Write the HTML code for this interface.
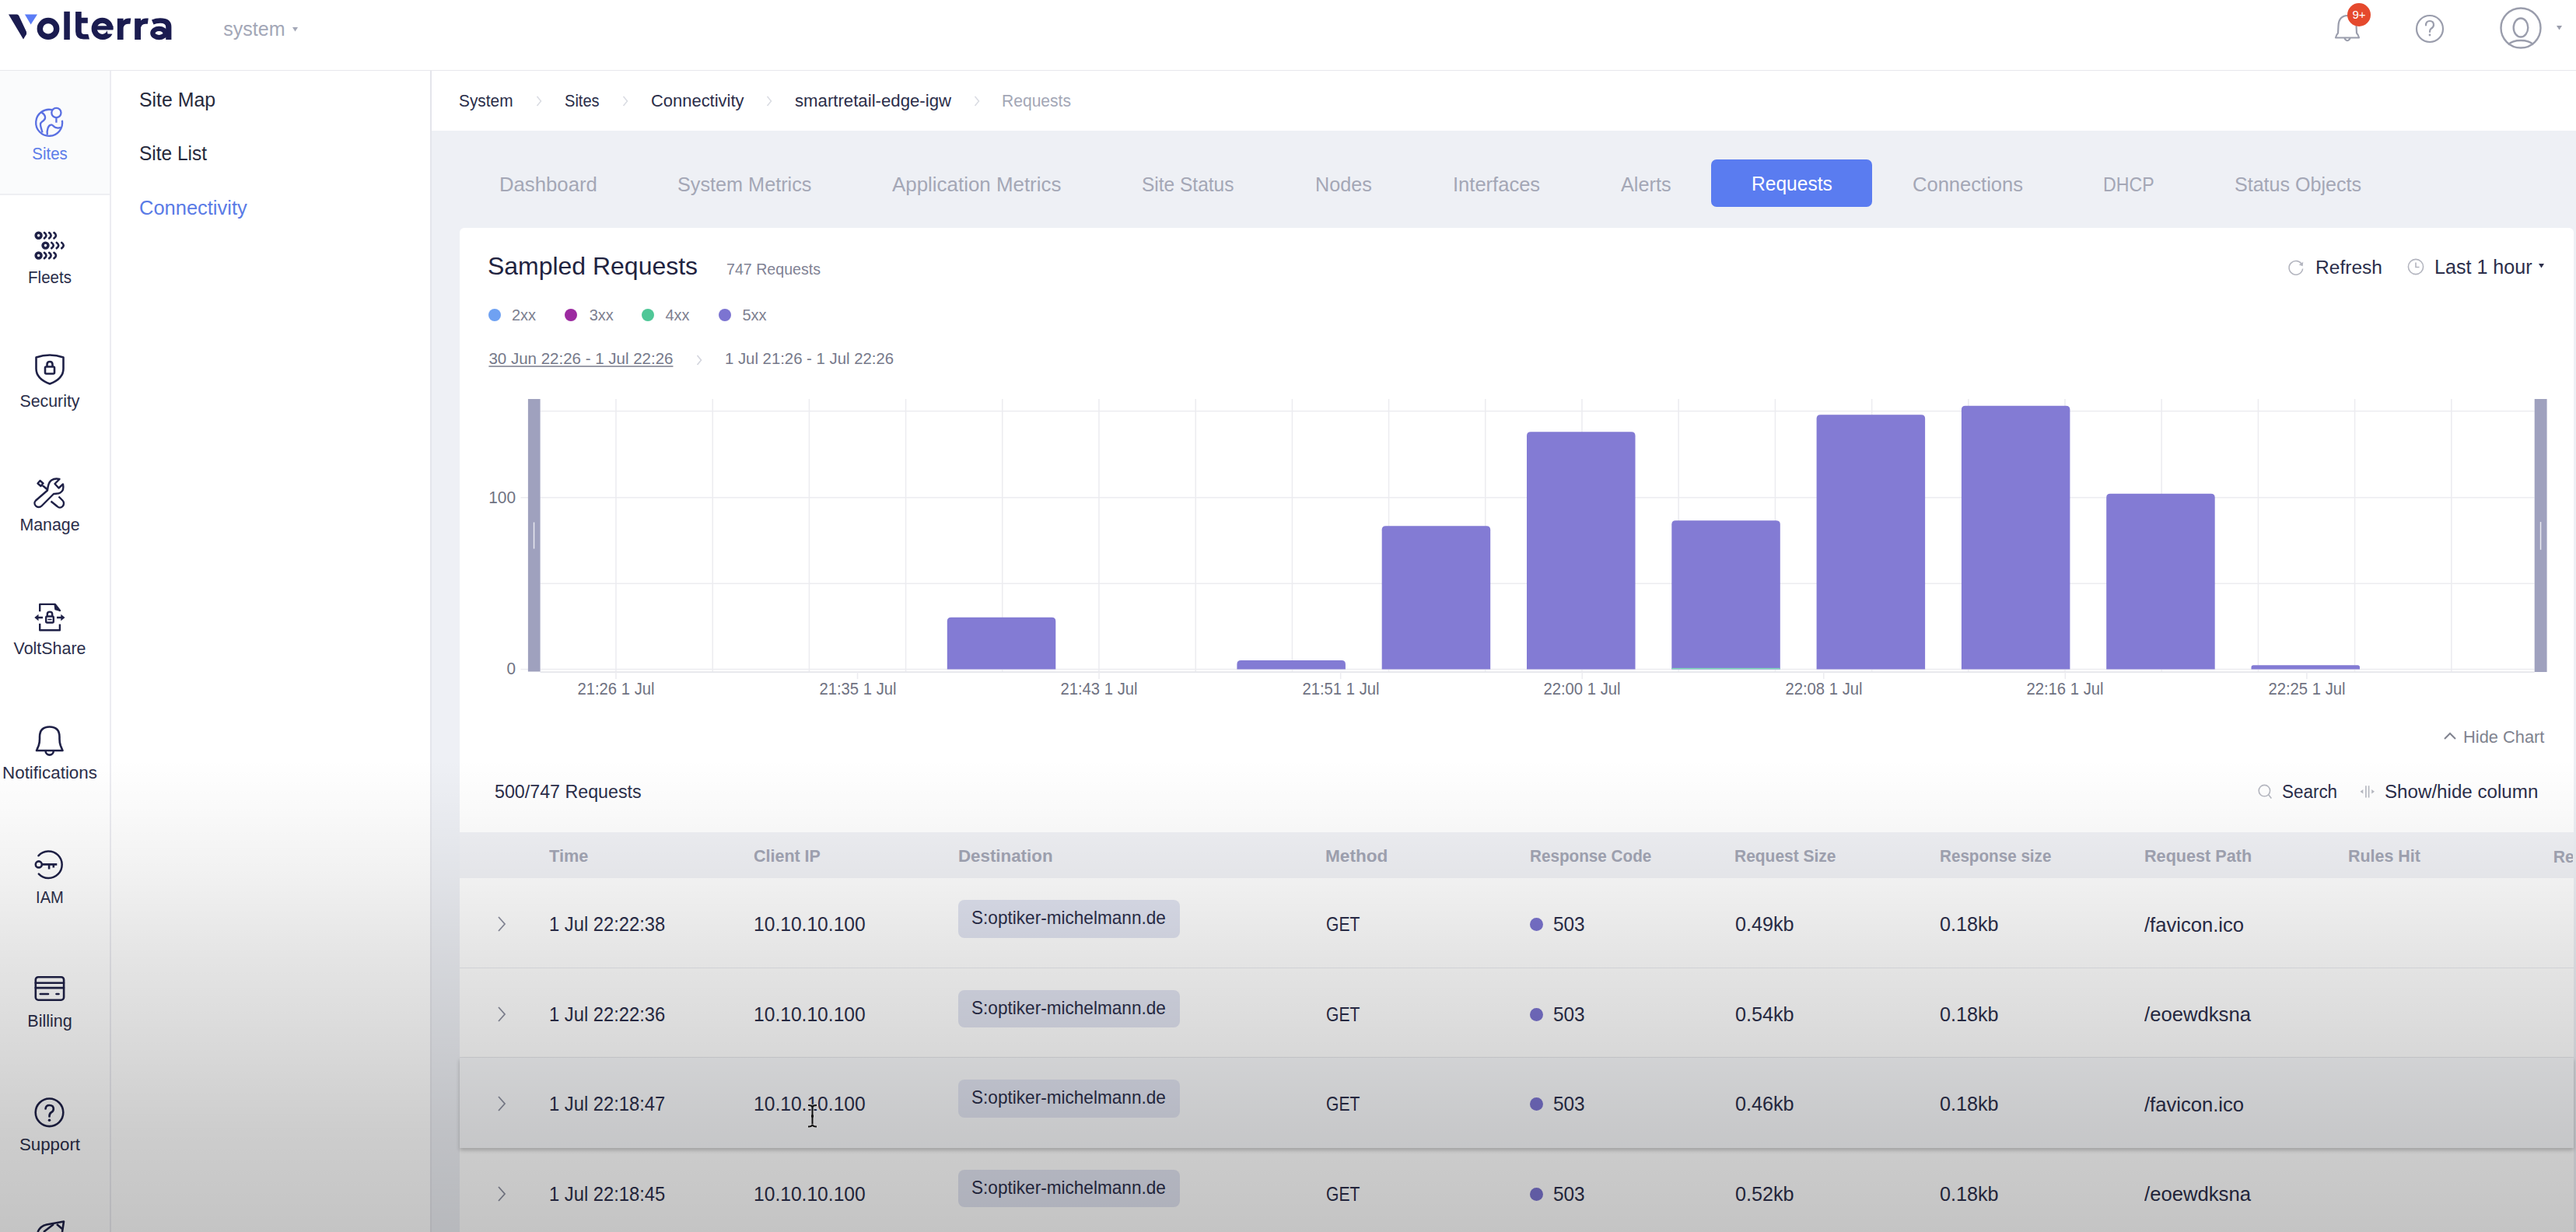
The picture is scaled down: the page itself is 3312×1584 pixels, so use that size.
<!DOCTYPE html>
<html><head><meta charset="utf-8"><title>Volterra - Requests</title>
<style>
html,body{margin:0;padding:0;width:3312px;height:1584px;overflow:hidden;background:#fff}
body{position:relative;font-family:"Liberation Sans",sans-serif}
.t{position:absolute;white-space:nowrap}
.r{position:absolute;display:block}
svg text{font-family:"Liberation Sans",sans-serif}
</style></head><body>
<div class="r" style="left:0.0px;top:0.0px;width:3312.0px;height:1584.0px;background:#ffffff;"></div>
<div class="r" style="left:554.8px;top:168.0px;width:2757.2px;height:1416.0px;background:#eef0f5;"></div>
<div class="r" style="left:0.0px;top:89.5px;width:3312.0px;height:1.5px;background:#e7e8ec;"></div>
<div class="r" style="left:141.0px;top:91.0px;width:1.5px;height:1493.0px;background:#ececf1;"></div>
<div class="r" style="left:553.2px;top:91.0px;width:1.6px;height:1493.0px;background:#e4e5eb;"></div>
<div class="r" style="left:0.0px;top:91.0px;width:141.0px;height:158.0px;background:#fafbfc;"></div>
<div class="r" style="left:0.0px;top:249.0px;width:141.0px;height:1.5px;background:#eeeff3;"></div>
<svg class="r" style="left:0;top:0" width="260" height="90" viewBox="0 0 260 90">
<path d="M11 18.4 L21.8 18.4 Q23.5 18.6 24.3 20.2 L33.8 40.5 Q34.6 42.5 33.8 44.3 L30 50.6 Z" fill="#1b1c50"/>
<path d="M31.9 18.6 L48 18.6 L39.6 31.6 Z" fill="#5b7cf5"/>
<ellipse cx="62" cy="36.9" rx="10.7" ry="10.4" fill="none" stroke="#1b1c50" stroke-width="7.4"/>
<rect x="82.3" y="14.8" width="7.5" height="36.2" fill="#1b1c50"/>
<path d="M97.1 15.1 L104.7 15.1 L104.7 22.7 L112.8 22.7 L112.8 29.7 L104.7 29.7 L104.7 40.5 Q104.7 43.9 108.3 43.9 L113.3 43.9 L115 50.4 L107.5 50.4 Q97.1 50.4 97.1 40.5 Z" fill="#1b1c50"/>
<ellipse cx="131.5" cy="36.8" rx="10.4" ry="10.6" fill="none" stroke="#1b1c50" stroke-width="7"/>
<rect x="121" y="33.3" width="24.5" height="5.2" fill="#1b1c50"/>
<path d="M137.5 38.5 L147 38.5 L147 43.8 L138.5 43.8 Z" fill="#ffffff"/>
<path d="M136.5 43.8 L144.5 43.8 Q141 51 131.8 51 L131.5 44.5 Q134.5 44.5 136.5 43.8 Z" fill="#1b1c50"/>
<path d="M150.9 51 L150.9 23.8 L158.6 23.8 L158.6 26.5 Q161 23.6 165.5 23.6 L168.3 23.6 L167.3 30.8 L164.5 30.8 Q158.6 30.8 158.6 37.5 L158.6 51 Z" fill="#1b1c50"/>
<path d="M173.2 51 L173.2 23.8 L181 23.8 L181 26.5 Q183.4 23.6 187.9 23.6 L190.8 23.6 L189.8 30.8 L187 30.8 Q181 30.8 181 37.5 L181 51 Z" fill="#1b1c50"/>
<path d="M195 25.5 Q200 23.2 206 23.2 Q220.4 23.2 220.4 34.5 L220.4 51 L213.2 51 L213.2 34.5 Q213.2 29.8 206 29.8 Q201 29.8 197.5 31.5 Z" fill="#1b1c50"/>
<ellipse cx="204.5" cy="42.5" rx="8.1" ry="5.6" fill="none" stroke="#1b1c50" stroke-width="6.4"/>
</svg>
<div class="t" style="left:287.3px;top:24.0px;font-size:25px;line-height:27.93px;color:#a3a7b7;">system</div>
<svg class="r" style="left:375px;top:34px" width="10" height="8"><path d="M1 1 L8 1 L4.5 6.5 Z" fill="#a3a7b7"/></svg>
<svg class="r" style="left:2995px;top:12px" width="50" height="50" viewBox="0 0 50 50">
<path d="M8 36.5 Q9 32.5 11 30.5 L11.5 21 Q12 8.5 23 8 Q34 8.5 34.5 21 L35 30.5 Q37 32.5 38 36.5 Z" fill="none" stroke="#9a9dac" stroke-width="2.2" stroke-linejoin="round"/>
<path d="M19.3 37 Q23 43.5 26.7 37" fill="none" stroke="#9a9dac" stroke-width="2.2"/>
</svg>
<div class="r" style="left:3018px;top:4px;width:30px;height:30px;border-radius:50%;background:#e5492d;color:#fff;font-size:15px;line-height:30px;text-align:center;font-weight:400">9+</div>
<svg class="r" style="left:3100px;top:13px" width="48" height="48" viewBox="0 0 48 48">
<circle cx="24" cy="24" r="17" fill="none" stroke="#9a9dac" stroke-width="2.2"/>
<path d="M19 19.5 Q19 14 24 14 Q29 14 29 19 Q29 22 25.5 24 Q24 25 24 28" fill="none" stroke="#9a9dac" stroke-width="2.2" stroke-linecap="round"/>
<circle cx="24" cy="32" r="1.4" fill="#9a9dac"/>
</svg>
<svg class="r" style="left:3212px;top:7px" width="60" height="60" viewBox="0 0 60 60">
<circle cx="29" cy="29" r="25.5" fill="none" stroke="#9a9dac" stroke-width="2.4"/>
<ellipse cx="29" cy="28.5" rx="9.3" ry="12" fill="none" stroke="#9a9dac" stroke-width="2.4"/>
<path d="M13 50.5 Q18 45 29 45 Q40 45 45 50.5" fill="none" stroke="#9a9dac" stroke-width="2.4"/>
</svg>
<svg class="r" style="left:3286px;top:32px" width="10" height="8"><path d="M1 1 L8 1 L4.5 6.5 Z" fill="#9a9dac"/></svg>
<svg class="r" style="left:36px;top:130px" width="56" height="56" viewBox="0 0 56 56">
<path d="M30.9 11.2 A17 17 0 1 0 43.9 24.8" fill="none" stroke="#5a70e2" stroke-width="2.3"/>
<circle cx="36.4" cy="15" r="6.1" fill="none" stroke="#5a70e2" stroke-width="2.3"/>
<path d="M36.4 21.2 L36.4 27.7" stroke="#5a70e2" stroke-width="2.3"/>
<path d="M17.5 14.5 C23 18, 24 23, 18 26.5 C14 29, 17 34, 18.5 40.5" fill="none" stroke="#5a70e2" stroke-width="2.3"/>
<path d="M24.8 43.5 C24 37, 26 31, 29.5 30.5 C32 30, 33 33.5, 36 34.2 C38.5 34.8, 40.5 34.5, 42 33.8" fill="none" stroke="#5a70e2" stroke-width="2.3"/>
</svg>
<div class="t" style="left:-436.0px;width:1000px;text-align:center;top:186.0px;font-size:21.5px;line-height:24.02px;color:#5d7de9;transform:scaleX(0.9519);transform-origin:center;">Sites</div>
<svg class="r" style="left:38px;top:290px" width="54" height="50" viewBox="0 0 54 50"><circle cx="11.6" cy="12.8" r="3.5" fill="none" stroke="#1f2147" stroke-width="3.4"/><path d="M19.0 9.200000000000001 Q23.9 12.8 19.0 16.400000000000002" fill="none" stroke="#1f2147" stroke-width="2.7" stroke-linecap="round"/><path d="M25.2 9.200000000000001 Q30.099999999999998 12.8 25.2 16.400000000000002" fill="none" stroke="#1f2147" stroke-width="2.7" stroke-linecap="round"/><path d="M31.5 9.200000000000001 Q36.4 12.8 31.5 16.400000000000002" fill="none" stroke="#1f2147" stroke-width="2.7" stroke-linecap="round"/><circle cx="20.5" cy="25.6" r="3.5" fill="none" stroke="#1f2147" stroke-width="3.4"/><path d="M28.3 22.0 Q33.2 25.6 28.3 29.200000000000003" fill="none" stroke="#1f2147" stroke-width="2.7" stroke-linecap="round"/><path d="M34.8 22.0 Q39.7 25.6 34.8 29.200000000000003" fill="none" stroke="#1f2147" stroke-width="2.7" stroke-linecap="round"/><path d="M41.3 22.0 Q46.2 25.6 41.3 29.200000000000003" fill="none" stroke="#1f2147" stroke-width="2.7" stroke-linecap="round"/><circle cx="11.6" cy="38.5" r="3.5" fill="none" stroke="#1f2147" stroke-width="3.4"/><path d="M19.0 34.9 Q23.9 38.5 19.0 42.1" fill="none" stroke="#1f2147" stroke-width="2.7" stroke-linecap="round"/><path d="M25.2 34.9 Q30.099999999999998 38.5 25.2 42.1" fill="none" stroke="#1f2147" stroke-width="2.7" stroke-linecap="round"/><path d="M31.5 34.9 Q36.4 38.5 31.5 42.1" fill="none" stroke="#1f2147" stroke-width="2.7" stroke-linecap="round"/></svg>
<div class="t" style="left:-436.0px;width:1000px;text-align:center;top:345.3px;font-size:21.5px;line-height:24.02px;color:#2b2e4a;transform:scaleX(0.9548);transform-origin:center;">Fleets</div>
<svg class="r" style="left:40px;top:450px" width="48" height="50" viewBox="0 0 48 50">
<path d="M6.5 9.5 Q24 3.5 41.5 9.5 L41.5 24 Q41.5 37 24 43.5 Q6.5 37 6.5 24 Z" fill="none" stroke="#1f2147" stroke-width="2.6" stroke-linejoin="round"/>
<rect x="18" y="21.5" width="12" height="9" rx="1.5" fill="none" stroke="#1f2147" stroke-width="2.6"/>
<path d="M20.5 21.5 L20.5 18.5 Q20.5 15 24 15 Q27.5 15 27.5 18.5 L27.5 21.5" fill="none" stroke="#1f2147" stroke-width="2.6"/>
</svg>
<div class="t" style="left:-436.0px;width:1000px;text-align:center;top:503.8px;font-size:21.5px;line-height:24.02px;color:#2b2e4a;transform:scaleX(0.9915);transform-origin:center;">Security</div>
<svg class="r" style="left:40px;top:608px" width="48" height="50" viewBox="0 0 48 50">
<path d="M21 22.5 C21.5 17 22.5 12 26 9.5 C29 7.5 33 7 36.5 8 L30.5 14 L35.5 19.5 L41 14.5 C42 19 41 23.5 37.5 25.5 C35 27 32 26.5 29 27 L13.5 42.5 C11.5 44.5 8 44.5 6 42.5 C4 40.5 4 37.5 6 35.5 Z" fill="none" stroke="#1f2147" stroke-width="2.4" stroke-linejoin="round"/>
<path d="M8.5 13.5 L11.5 10 L15.5 13.5 L12.5 17 Z M14 15.5 L21 21.5" fill="none" stroke="#1f2147" stroke-width="2.4" stroke-linejoin="round"/>
<path d="M35.5 30.5 L40.5 35.5 C42.5 37.5 42.5 41 40.5 43 C38.5 45 35.5 45 33.5 43 L25.5 36.5" fill="none" stroke="#1f2147" stroke-width="2.4"/>
</svg>
<div class="t" style="left:-436.0px;width:1000px;text-align:center;top:663.1px;font-size:21.5px;line-height:24.02px;color:#2b2e4a;transform:scaleX(0.9911);transform-origin:center;">Manage</div>
<svg class="r" style="left:40px;top:768px" width="48" height="50" viewBox="0 0 48 50">
<path d="M11.2 18.3 L11.2 8.9 L30.8 8.9 L37.3 17.4" fill="none" stroke="#1f2147" stroke-width="2.4" stroke-linejoin="round"/>
<path d="M30.2 8.9 L31 15.5 L37.3 17.4 Z" fill="#1f2147" stroke="#1f2147" stroke-width="1.5" stroke-linejoin="round"/>
<path d="M11.2 33.7 L11.2 42.2 L36.9 42.2 L36.9 34.5" fill="none" stroke="#1f2147" stroke-width="2.4" stroke-linejoin="round"/>
<path d="M8 26 L15 26 M33 26 L40 26" stroke="#1f2147" stroke-width="2.4"/>
<path d="M4.3 26 L9.5 21.8 L9.5 30.2 Z M43.5 26 L38.3 21.8 L38.3 30.2 Z" fill="#1f2147"/>
<rect x="19.2" y="24.5" width="9.6" height="8" rx="1.5" fill="none" stroke="#1f2147" stroke-width="2.4"/>
<path d="M20.8 24.5 L20.8 21.5 Q20.8 18.6 24 18.6 Q27.2 18.6 27.2 21.5 L27.2 24.5" fill="none" stroke="#1f2147" stroke-width="2.4"/>
<path d="M21.5 28.5 L26.5 28.5" stroke="#1f2147" stroke-width="1.6"/>
</svg>
<div class="t" style="left:-436.0px;width:1000px;text-align:center;top:822.4px;font-size:21.5px;line-height:24.02px;color:#2b2e4a;transform:scaleX(0.9965);transform-origin:center;">VoltShare</div>
<svg class="r" style="left:40px;top:928px" width="48" height="50" viewBox="0 0 48 50">
<path d="M7 37 L40.5 37 L37.8 30.5 Q36.5 27 36.5 22 L36.5 19.5 Q36.5 6.5 23.7 6.5 Q11 6.5 11 19.5 L11 22 Q11 27 9.7 30.5 Z" fill="none" stroke="#1f2147" stroke-width="2.6" stroke-linejoin="round"/>
<path d="M18.6 37.5 A5.1 5.1 0 0 0 28.8 37.5" fill="none" stroke="#1f2147" stroke-width="2.6"/>
</svg>
<div class="t" style="left:-436.0px;width:1000px;text-align:center;top:981.5px;font-size:21.5px;line-height:24.02px;color:#2b2e4a;transform:scaleX(1.0410);transform-origin:center;">Notifications</div>
<svg class="r" style="left:40px;top:1087px" width="48" height="50" viewBox="0 0 48 50">
<path d="M9.5 13.2 A17.3 17.3 0 1 1 9.8 36.6" fill="none" stroke="#1f2147" stroke-width="2.5" stroke-linecap="round"/>
<circle cx="9.8" cy="24.4" r="4" fill="none" stroke="#1f2147" stroke-width="2.6"/>
<path d="M13.8 24.4 L33.3 24.4 M23.1 24.4 L23.1 30.4 M28.8 24.4 L28.8 28.4" fill="none" stroke="#1f2147" stroke-width="2.6"/>
</svg>
<div class="t" style="left:-436.0px;width:1000px;text-align:center;top:1141.5px;font-size:21.5px;line-height:24.02px;color:#2b2e4a;transform:scaleX(0.9366);transform-origin:center;">IAM</div>
<svg class="r" style="left:40px;top:1246px" width="48" height="50" viewBox="0 0 48 50">
<rect x="5.8" y="10.2" width="36.3" height="29.5" rx="3.5" fill="none" stroke="#1f2147" stroke-width="2.6"/>
<path d="M5.8 17.8 L42 17.8 M5.8 24.1 L42 24.1 M11.8 32 L22 32 M32.5 32 L35.5 32" fill="none" stroke="#1f2147" stroke-width="2.6" stroke-linecap="round"/>
</svg>
<div class="t" style="left:-436.0px;width:1000px;text-align:center;top:1301.1px;font-size:21.5px;line-height:24.02px;color:#2b2e4a;transform:scaleX(1.0007);transform-origin:center;">Billing</div>
<svg class="r" style="left:40px;top:1406px" width="48" height="50" viewBox="0 0 48 50">
<circle cx="23.5" cy="24.3" r="17.8" fill="none" stroke="#1f2147" stroke-width="2.6"/>
<path d="M18.6 19.5 Q19 15 23.5 15 Q28.8 15 28.8 19.8 Q28.8 22.8 25.5 24.5 Q23.5 25.8 23.5 29.5" fill="none" stroke="#1f2147" stroke-width="2.7" stroke-linecap="round"/>
<circle cx="23.5" cy="34.3" r="1.8" fill="#1f2147"/>
</svg>
<div class="t" style="left:-436.0px;width:1000px;text-align:center;top:1459.5px;font-size:21.5px;line-height:24.02px;color:#2b2e4a;transform:scaleX(1.0359);transform-origin:center;">Support</div>
<svg class="r" style="left:30px;top:1560px" width="70" height="24" viewBox="0 0 70 24">
<path d="M18.5 24 Q22 16 30 14.5 L52 10.5 L50 24" fill="none" stroke="#1f2147" stroke-width="2.6" stroke-linejoin="round"/>
<path d="M26 24 L39 14 M43 14 L50 20" fill="none" stroke="#1f2147" stroke-width="2.6"/>
</svg>
<div class="t" style="left:179.0px;top:115.0px;font-size:25px;line-height:27.93px;color:#262a3c;transform:scaleX(0.9934);transform-origin:left;">Site Map</div>
<div class="t" style="left:179.0px;top:184.4px;font-size:25px;line-height:27.93px;color:#262a3c;transform:scaleX(0.9783);transform-origin:left;">Site List</div>
<div class="t" style="left:179.0px;top:254.4px;font-size:25px;line-height:27.93px;color:#5a7be6;transform:scaleX(1.0186);transform-origin:left;">Connectivity</div>
<div class="r" style="left:554.8px;top:91.0px;width:2757.2px;height:77.0px;background:#ffffff;"></div>
<div class="t" style="left:590.2px;top:117.4px;font-size:22.5px;line-height:25.13px;color:#2b2e4a;transform:scaleX(0.9265);transform-origin:left;">System</div>
<div class="t" style="left:725.6px;top:117.4px;font-size:22.5px;line-height:25.13px;color:#2b2e4a;transform:scaleX(0.8916);transform-origin:left;">Sites</div>
<div class="t" style="left:836.5px;top:117.4px;font-size:22.5px;line-height:25.13px;color:#2b2e4a;transform:scaleX(0.9751);transform-origin:left;">Connectivity</div>
<div class="t" style="left:1021.7px;top:117.4px;font-size:22.5px;line-height:25.13px;color:#2b2e4a;transform:scaleX(0.9862);transform-origin:left;">smartretail-edge-igw</div>
<div class="t" style="left:1288.0px;top:117.4px;font-size:22.5px;line-height:25.13px;color:#a3a7b6;transform:scaleX(0.9364);transform-origin:left;">Requests</div>
<svg class="r" style="left:687.6px;top:121.5px" width="10" height="16"><path d="M2.5 2 L7.5 8 L2.5 14" fill="none" stroke="#d9dbe2" stroke-width="1.5"/></svg>
<svg class="r" style="left:799.0px;top:121.5px" width="10" height="16"><path d="M2.5 2 L7.5 8 L2.5 14" fill="none" stroke="#d9dbe2" stroke-width="1.5"/></svg>
<svg class="r" style="left:983.5px;top:121.5px" width="10" height="16"><path d="M2.5 2 L7.5 8 L2.5 14" fill="none" stroke="#d9dbe2" stroke-width="1.5"/></svg>
<svg class="r" style="left:1250.8px;top:121.5px" width="10" height="16"><path d="M2.5 2 L7.5 8 L2.5 14" fill="none" stroke="#d9dbe2" stroke-width="1.5"/></svg>
<div class="r" style="left:2199.7px;top:205.0px;width:207.8px;height:61.0px;background:#5a7cf0;border-radius:7px;"></div>
<div class="t" style="left:641.7px;top:222.9px;font-size:25.5px;line-height:28.48px;color:#a4a7b6;transform:scaleX(1.0085);transform-origin:left;">Dashboard</div>
<div class="t" style="left:870.9px;top:222.9px;font-size:25.5px;line-height:28.48px;color:#a4a7b6;transform:scaleX(0.9893);transform-origin:left;">System Metrics</div>
<div class="t" style="left:1146.6px;top:222.9px;font-size:25.5px;line-height:28.48px;color:#a4a7b6;transform:scaleX(1.0159);transform-origin:left;">Application Metrics</div>
<div class="t" style="left:1468.3px;top:222.9px;font-size:25.5px;line-height:28.48px;color:#a4a7b6;transform:scaleX(0.9602);transform-origin:left;">Site Status</div>
<div class="t" style="left:1690.5px;top:222.9px;font-size:25.5px;line-height:28.48px;color:#a4a7b6;transform:scaleX(0.9877);transform-origin:left;">Nodes</div>
<div class="t" style="left:1867.5px;top:222.9px;font-size:25.5px;line-height:28.48px;color:#a4a7b6;transform:scaleX(1.0012);transform-origin:left;">Interfaces</div>
<div class="t" style="left:2083.5px;top:222.9px;font-size:25.5px;line-height:28.48px;color:#a4a7b6;transform:scaleX(0.9896);transform-origin:left;">Alerts</div>
<div class="t" style="left:2252.0px;top:223.4px;font-size:25px;line-height:27.93px;color:#ffffff;transform:scaleX(0.9829);transform-origin:left;">Requests</div>
<div class="t" style="left:2459.0px;top:222.9px;font-size:25.5px;line-height:28.48px;color:#a4a7b6;transform:scaleX(1.0018);transform-origin:left;">Connections</div>
<div class="t" style="left:2704.0px;top:222.9px;font-size:25.5px;line-height:28.48px;color:#a4a7b6;transform:scaleX(0.9079);transform-origin:left;">DHCP</div>
<div class="t" style="left:2873.0px;top:222.9px;font-size:25.5px;line-height:28.48px;color:#a4a7b6;transform:scaleX(0.9830);transform-origin:left;">Status Objects</div>
<div class="r" style="left:591.0px;top:292.7px;width:2717.5px;height:1400.0px;background:#ffffff;border-radius:6px;"></div>
<div class="t" style="left:627.0px;top:325.0px;font-size:32px;line-height:35.74px;color:#1f2340;transform:scaleX(0.9987);transform-origin:left;">Sampled Requests</div>
<div class="t" style="left:933.6px;top:336.3px;font-size:19.6px;line-height:21.89px;color:#7f8294;transform:scaleX(1.0013);transform-origin:left;">747 Requests</div>
<svg class="r" style="left:2940px;top:332px" width="24" height="24" viewBox="0 0 24 24">
<path d="M19.8 8.5 A8.8 8.8 0 1 0 20.6 13.5" fill="none" stroke="#b3b5bf" stroke-width="1.6"/>
<path d="M21.3 4.8 L20.6 10.2 L15.8 8.6 Z" fill="#b3b5bf"/>
</svg>
<div class="t" style="left:2977.0px;top:330.0px;font-size:24.6px;line-height:27.48px;color:#2b2e4a;transform:scaleX(0.9985);transform-origin:left;">Refresh</div>
<svg class="r" style="left:3093px;top:331px" width="26" height="26" viewBox="0 0 26 26">
<circle cx="13" cy="12" r="9.6" fill="none" stroke="#b3b5bf" stroke-width="1.6"/>
<path d="M13 6.5 L13 12.5 L17.5 12.5" fill="none" stroke="#b3b5bf" stroke-width="1.6"/>
</svg>
<div class="t" style="left:3130.0px;top:329.7px;font-size:25px;line-height:27.93px;color:#2b2e4a;transform:scaleX(1.0042);transform-origin:left;">Last 1 hour</div>
<svg class="r" style="left:3263px;top:338px" width="10" height="8"><path d="M1 1 L8 1 L4.5 6.5 Z" fill="#2b2e4a"/></svg>
<div class="r" style="left:628px;top:397px;width:16px;height:16px;border-radius:50%;background:#6fa1f2"></div>
<div class="t" style="left:658.0px;top:394.2px;font-size:20px;line-height:22.34px;color:#7d8090;">2xx</div>
<div class="r" style="left:726px;top:397px;width:16px;height:16px;border-radius:50%;background:#9c2aa0"></div>
<div class="t" style="left:757.7px;top:394.2px;font-size:20px;line-height:22.34px;color:#7d8090;">3xx</div>
<div class="r" style="left:825.4px;top:397px;width:16px;height:16px;border-radius:50%;background:#4fc797"></div>
<div class="t" style="left:855.5px;top:394.2px;font-size:20px;line-height:22.34px;color:#7d8090;">4xx</div>
<div class="r" style="left:924px;top:397px;width:16px;height:16px;border-radius:50%;background:#7c74d1"></div>
<div class="t" style="left:954.5px;top:394.2px;font-size:20px;line-height:22.34px;color:#7d8090;">5xx</div>
<div class="t" style="left:628.4px;top:450.4px;font-size:20.5px;line-height:22.90px;color:#76798a;text-decoration:underline;text-underline-offset:2px;text-decoration-thickness:1.5px;text-decoration-color:#9a9ca8;">30 Jun 22:26 - 1 Jul 22:26</div>
<svg class="r" style="left:894px;top:455px" width="10" height="16"><path d="M2.5 2 L7.5 8 L2.5 14" fill="none" stroke="#d3d5dd" stroke-width="1.6"/></svg>
<div class="t" style="left:932.0px;top:450.4px;font-size:20.5px;line-height:22.90px;color:#76798a;transform:scaleX(0.9918);transform-origin:left;">1 Jul 21:26 - 1 Jul 22:26</div>
<svg class="r" style="left:0;top:0" width="3312" height="1000" viewBox="0 0 3312 1000"><rect x="694.6" y="527.85" width="2564" height="1.5" fill="#ececf0"/><rect x="694.6" y="638.95" width="2564" height="1.5" fill="#ececf0"/><rect x="694.6" y="749.55" width="2564" height="1.5" fill="#ececf0"/><rect x="694.6" y="859.75" width="2564" height="1.5" fill="#ececf0"/><rect x="791.2" y="513" width="1.5" height="351" fill="#ececf0"/><rect x="915.5" y="513" width="1.5" height="351" fill="#ececf0"/><rect x="1039.7" y="513" width="1.5" height="351" fill="#ececf0"/><rect x="1163.8" y="513" width="1.5" height="351" fill="#ececf0"/><rect x="1288.0" y="513" width="1.5" height="351" fill="#ececf0"/><rect x="1412.2" y="513" width="1.5" height="351" fill="#ececf0"/><rect x="1536.5" y="513" width="1.5" height="351" fill="#ececf0"/><rect x="1660.7" y="513" width="1.5" height="351" fill="#ececf0"/><rect x="1784.8" y="513" width="1.5" height="351" fill="#ececf0"/><rect x="1909.0" y="513" width="1.5" height="351" fill="#ececf0"/><rect x="2033.2" y="513" width="1.5" height="351" fill="#ececf0"/><rect x="2157.4" y="513" width="1.5" height="351" fill="#ececf0"/><rect x="2281.7" y="513" width="1.5" height="351" fill="#ececf0"/><rect x="2405.9" y="513" width="1.5" height="351" fill="#ececf0"/><rect x="2530.1" y="513" width="1.5" height="351" fill="#ececf0"/><rect x="2654.2" y="513" width="1.5" height="351" fill="#ececf0"/><rect x="2778.4" y="513" width="1.5" height="351" fill="#ececf0"/><rect x="2902.7" y="513" width="1.5" height="351" fill="#ececf0"/><rect x="3026.8" y="513" width="1.5" height="351" fill="#ececf0"/><rect x="3151.1" y="513" width="1.5" height="351" fill="#ececf0"/><rect x="694.6" y="863.2" width="2564" height="1.8" fill="#e6e7ec"/><rect x="791.2" y="864" width="1.5" height="9" fill="#ececf0"/><rect x="1101.8" y="864" width="1.5" height="9" fill="#ececf0"/><rect x="1412.3" y="864" width="1.5" height="9" fill="#ececf0"/><rect x="1722.9" y="864" width="1.5" height="9" fill="#ececf0"/><rect x="2033.5" y="864" width="1.5" height="9" fill="#ececf0"/><rect x="2344.0" y="864" width="1.5" height="9" fill="#ececf0"/><rect x="2654.6" y="864" width="1.5" height="9" fill="#ececf0"/><rect x="2965.1" y="864" width="1.5" height="9" fill="#ececf0"/><rect x="669.5" y="639" width="10" height="1.5" fill="#ececf0"/><rect x="669.5" y="859.8" width="10" height="1.5" fill="#ececf0"/><path d="M1217.8 860.5 L1217.8 798.7 Q1217.8 793.7 1222.8 793.7 L1352.3 793.7 Q1357.3 793.7 1357.3 798.7 L1357.3 860.5 Z" fill="#837bd4"/><path d="M1590.4 860.5 L1590.4 854.0 Q1590.4 849.0 1595.4 849.0 L1724.9 849.0 Q1729.9 849.0 1729.9 854.0 L1729.9 860.5 Z" fill="#837bd4"/><path d="M1776.7 860.5 L1776.7 681.3 Q1776.7 676.3 1781.7 676.3 L1911.2 676.3 Q1916.2 676.3 1916.2 681.3 L1916.2 860.5 Z" fill="#837bd4"/><path d="M1963.0 860.5 L1963.0 560.2 Q1963.0 555.2 1968.0 555.2 L2097.5 555.2 Q2102.5 555.2 2102.5 560.2 L2102.5 860.5 Z" fill="#837bd4"/><path d="M2149.3 860.5 L2149.3 674.3 Q2149.3 669.3 2154.3 669.3 L2283.8 669.3 Q2288.8 669.3 2288.8 674.3 L2288.8 860.5 Z" fill="#837bd4"/><path d="M2335.6 860.5 L2335.6 538.2 Q2335.6 533.2 2340.6 533.2 L2470.1 533.2 Q2475.1 533.2 2475.1 538.2 L2475.1 860.5 Z" fill="#837bd4"/><path d="M2521.9 860.5 L2521.9 526.8 Q2521.9 521.8 2526.9 521.8 L2656.4 521.8 Q2661.4 521.8 2661.4 526.8 L2661.4 860.5 Z" fill="#837bd4"/><path d="M2708.2 860.5 L2708.2 639.8 Q2708.2 634.8 2713.2 634.8 L2842.7 634.8 Q2847.7 634.8 2847.7 639.8 L2847.7 860.5 Z" fill="#837bd4"/><path d="M2894.5 860.5 L2894.5 857.9 Q2894.5 855.2 2897.2 855.2 L3031.3 855.2 Q3034.0 855.2 3034.0 857.9 L3034.0 860.5 Z" fill="#837bd4"/><rect x="2149.3" y="858.9" width="139.5" height="1.4" fill="#7fdcb8"/><rect x="678.9" y="513" width="15.7" height="350.5" fill="#9fa1be"/><rect x="685.8" y="671.5" width="1.5" height="34" fill="#e8e9f0"/><rect x="3258.7" y="513" width="15.9" height="351" fill="#9fa1be"/><rect x="3265.8" y="671" width="1.5" height="35.8" fill="#e8e9f0"/></svg>
<div class="t" style="left:-337.2px;width:1000px;text-align:right;top:627.5px;font-size:21.5px;line-height:24.02px;color:#6f7282;transform:scaleX(0.9702);transform-origin:right;">100</div>
<div class="t" style="left:-337.2px;width:1000px;text-align:right;top:847.5px;font-size:21.5px;line-height:24.02px;color:#6f7282;transform:scaleX(0.9619);transform-origin:right;">0</div>
<div class="t" style="left:292.0px;width:1000px;text-align:center;top:874.3px;font-size:22px;line-height:24.57px;color:#6f7282;transform:scaleX(0.9198);transform-origin:center;">21:26 1 Jul</div>
<div class="t" style="left:602.5px;width:1000px;text-align:center;top:874.3px;font-size:22px;line-height:24.57px;color:#6f7282;transform:scaleX(0.9198);transform-origin:center;">21:35 1 Jul</div>
<div class="t" style="left:913.1px;width:1000px;text-align:center;top:874.3px;font-size:22px;line-height:24.57px;color:#6f7282;transform:scaleX(0.9198);transform-origin:center;">21:43 1 Jul</div>
<div class="t" style="left:1223.7px;width:1000px;text-align:center;top:874.3px;font-size:22px;line-height:24.57px;color:#6f7282;transform:scaleX(0.9198);transform-origin:center;">21:51 1 Jul</div>
<div class="t" style="left:1534.2px;width:1000px;text-align:center;top:874.3px;font-size:22px;line-height:24.57px;color:#6f7282;transform:scaleX(0.9198);transform-origin:center;">22:00 1 Jul</div>
<div class="t" style="left:1844.8px;width:1000px;text-align:center;top:874.3px;font-size:22px;line-height:24.57px;color:#6f7282;transform:scaleX(0.9198);transform-origin:center;">22:08 1 Jul</div>
<div class="t" style="left:2155.3px;width:1000px;text-align:center;top:874.3px;font-size:22px;line-height:24.57px;color:#6f7282;transform:scaleX(0.9198);transform-origin:center;">22:16 1 Jul</div>
<div class="t" style="left:2465.8px;width:1000px;text-align:center;top:874.3px;font-size:22px;line-height:24.57px;color:#6f7282;transform:scaleX(0.9198);transform-origin:center;">22:25 1 Jul</div>
<svg class="r" style="left:3141px;top:940px" width="18" height="12"><path d="M2 10 L9 3 L16 10" fill="none" stroke="#80838f" stroke-width="2"/></svg>
<div class="t" style="left:3167.0px;top:936.0px;font-size:21.5px;line-height:24.02px;color:#80838f;transform:scaleX(1.0160);transform-origin:left;">Hide Chart</div>
<div class="t" style="left:635.6px;top:1005.5px;font-size:23.2px;line-height:25.91px;color:#2b2e4a;transform:scaleX(1.0021);transform-origin:left;">500/747 Requests</div>
<svg class="r" style="left:2901px;top:1007px" width="24" height="24" viewBox="0 0 24 24">
<circle cx="10.4" cy="9.6" r="7.2" fill="none" stroke="#b6b8c1" stroke-width="1.6"/>
<path d="M15.6 14.8 L19.4 19.4" stroke="#b6b8c1" stroke-width="1.6"/>
</svg>
<div class="t" style="left:2933.9px;top:1005.8px;font-size:23px;line-height:25.69px;color:#2b2e4a;transform:scaleX(0.9757);transform-origin:left;">Search</div>
<svg class="r" style="left:3030px;top:1006px" width="26" height="24" viewBox="0 0 26 24">
<path d="M11.9 4.3 L11.9 19.4 M15.6 4.3 L15.6 19.4" stroke="#b6b8c1" stroke-width="1.6"/>
<path d="M4.5 11.8 L8.3 9 L8.3 14.6 Z M23 11.8 L19.2 9 L19.2 14.6 Z" fill="#b6b8c1"/>
</svg>
<div class="t" style="left:3065.5px;top:1005.3px;font-size:23.5px;line-height:26.25px;color:#2b2e4a;transform:scaleX(1.0275);transform-origin:left;">Show/hide column</div>
<div class="r" style="left:591.0px;top:1069.6px;width:2717.5px;height:59.8px;background:#f1f2f6;"></div>
<div class="t" style="left:705.7px;top:1089.1px;font-size:22px;line-height:24.57px;color:#a3a6b5;font-weight:700;transform:scaleX(0.9873);transform-origin:left;">Time</div>
<div class="t" style="left:968.9px;top:1089.1px;font-size:22px;line-height:24.57px;color:#a3a6b5;font-weight:700;transform:scaleX(0.9761);transform-origin:left;">Client IP</div>
<div class="t" style="left:1231.5px;top:1089.1px;font-size:22px;line-height:24.57px;color:#a3a6b5;font-weight:700;transform:scaleX(1.0144);transform-origin:left;">Destination</div>
<div class="t" style="left:1703.9px;top:1089.1px;font-size:22px;line-height:24.57px;color:#a3a6b5;font-weight:700;transform:scaleX(1.0269);transform-origin:left;">Method</div>
<div class="t" style="left:1967.4px;top:1089.1px;font-size:22px;line-height:24.57px;color:#a3a6b5;font-weight:700;transform:scaleX(0.9402);transform-origin:left;">Response Code</div>
<div class="t" style="left:2230.2px;top:1089.1px;font-size:22px;line-height:24.57px;color:#a3a6b5;font-weight:700;transform:scaleX(0.9524);transform-origin:left;">Request Size</div>
<div class="t" style="left:2493.5px;top:1089.1px;font-size:22px;line-height:24.57px;color:#a3a6b5;font-weight:700;transform:scaleX(0.9383);transform-origin:left;">Response size</div>
<div class="t" style="left:2756.9px;top:1089.1px;font-size:22px;line-height:24.57px;color:#a3a6b5;font-weight:700;transform:scaleX(0.9824);transform-origin:left;">Request Path</div>
<div class="t" style="left:3019.3px;top:1089.1px;font-size:22px;line-height:24.57px;color:#a3a6b5;font-weight:700;transform:scaleX(0.9744);transform-origin:left;">Rules Hit</div>
<div class="r" style="left:3282.7px;top:1089px;width:25.8px;height:30px;overflow:hidden"><div class="t" style="left:0;top:0.8px;font-size:21.2px;line-height:23.68px;color:#a3a6b5;font-weight:700">Re</div></div>
<div class="r" style="left:591.0px;top:1243.9px;width:2717.5px;height:1.2px;background:#eaebef;"></div>
<svg class="r" style="left:638px;top:1177.4px;z-index:2" width="14" height="22"><path d="M3 2 L11 11 L3 20" fill="none" stroke="#8d90a0" stroke-width="1.8"/></svg>
<div class="t" style="left:706.4px;top:1175.0px;font-size:25px;line-height:27.93px;color:#2b2e4a;transform:scaleX(0.9506);transform-origin:left;z-index:2;">1 Jul 22:22:38</div>
<div class="t" style="left:968.9px;top:1175.0px;font-size:25px;line-height:27.93px;color:#2b2e4a;transform:scaleX(0.9845);transform-origin:left;z-index:2;">10.10.10.100</div>
<div class="r" style="left:1232.0px;top:1157.4px;width:285.0px;height:48.6px;background:#e1e4f1;border-radius:8px;z-index:2;"></div>
<div class="t" style="left:1249.0px;top:1168.2px;font-size:23.2px;line-height:25.91px;color:#2b2e4a;transform:scaleX(0.9743);transform-origin:left;z-index:2;">S:optiker-michelmann.de</div>
<div class="t" style="left:1704.5px;top:1175.0px;font-size:25px;line-height:27.93px;color:#2b2e4a;transform:scaleX(0.8426);transform-origin:left;z-index:2;">GET</div>
<div class="r" style="left:1967px;top:1180.1px;width:17.4px;height:17.4px;border-radius:50%;background:#7b74d0;z-index:2"></div>
<div class="t" style="left:1996.7px;top:1175.0px;font-size:25px;line-height:27.93px;color:#2b2e4a;transform:scaleX(0.9735);transform-origin:left;z-index:2;">503</div>
<div class="t" style="left:2230.5px;top:1175.0px;font-size:25px;line-height:27.93px;color:#2b2e4a;transform:scaleX(1.0073);transform-origin:left;z-index:2;">0.49kb</div>
<div class="t" style="left:2493.5px;top:1175.0px;font-size:25px;line-height:27.93px;color:#2b2e4a;transform:scaleX(1.0059);transform-origin:left;z-index:2;">0.18kb</div>
<div class="t" style="left:2756.9px;top:1174.5px;font-size:25.5px;line-height:28.48px;color:#2b2e4a;transform:scaleX(1.0035);transform-origin:left;z-index:2;">/favicon.ico</div>
<div class="r" style="left:591.0px;top:1359.4px;width:2717.5px;height:1.2px;background:#eaebef;"></div>
<svg class="r" style="left:638px;top:1292.9px;z-index:2" width="14" height="22"><path d="M3 2 L11 11 L3 20" fill="none" stroke="#8d90a0" stroke-width="1.8"/></svg>
<div class="t" style="left:706.4px;top:1290.5px;font-size:25px;line-height:27.93px;color:#2b2e4a;transform:scaleX(0.9506);transform-origin:left;z-index:2;">1 Jul 22:22:36</div>
<div class="t" style="left:968.9px;top:1290.5px;font-size:25px;line-height:27.93px;color:#2b2e4a;transform:scaleX(0.9845);transform-origin:left;z-index:2;">10.10.10.100</div>
<div class="r" style="left:1232.0px;top:1272.9px;width:285.0px;height:48.6px;background:#e1e4f1;border-radius:8px;z-index:2;"></div>
<div class="t" style="left:1249.0px;top:1283.7px;font-size:23.2px;line-height:25.91px;color:#2b2e4a;transform:scaleX(0.9743);transform-origin:left;z-index:2;">S:optiker-michelmann.de</div>
<div class="t" style="left:1704.5px;top:1290.5px;font-size:25px;line-height:27.93px;color:#2b2e4a;transform:scaleX(0.8426);transform-origin:left;z-index:2;">GET</div>
<div class="r" style="left:1967px;top:1295.6px;width:17.4px;height:17.4px;border-radius:50%;background:#7b74d0;z-index:2"></div>
<div class="t" style="left:1996.7px;top:1290.5px;font-size:25px;line-height:27.93px;color:#2b2e4a;transform:scaleX(0.9735);transform-origin:left;z-index:2;">503</div>
<div class="t" style="left:2230.5px;top:1290.5px;font-size:25px;line-height:27.93px;color:#2b2e4a;transform:scaleX(1.0073);transform-origin:left;z-index:2;">0.54kb</div>
<div class="t" style="left:2493.5px;top:1290.5px;font-size:25px;line-height:27.93px;color:#2b2e4a;transform:scaleX(1.0059);transform-origin:left;z-index:2;">0.18kb</div>
<div class="t" style="left:2756.9px;top:1290.0px;font-size:25.5px;line-height:28.48px;color:#2b2e4a;transform:scaleX(1.0067);transform-origin:left;z-index:2;">/eoewdksna</div>
<div class="r" style="left:591.0px;top:1360.4px;width:2717.5px;height:115.5px;background:#f8f9fb;box-shadow:0 3px 5px rgba(0,0,0,0.22);z-index:1;"></div>
<svg class="r" style="left:638px;top:1408.4px;z-index:2" width="14" height="22"><path d="M3 2 L11 11 L3 20" fill="none" stroke="#8d90a0" stroke-width="1.8"/></svg>
<div class="t" style="left:706.4px;top:1406.0px;font-size:25px;line-height:27.93px;color:#2b2e4a;transform:scaleX(0.9506);transform-origin:left;z-index:2;">1 Jul 22:18:47</div>
<div class="t" style="left:968.9px;top:1406.0px;font-size:25px;line-height:27.93px;color:#2b2e4a;transform:scaleX(0.9845);transform-origin:left;z-index:2;">10.10.10.100</div>
<div class="r" style="left:1232.0px;top:1388.4px;width:285.0px;height:48.6px;background:#e1e4f1;border-radius:8px;z-index:2;"></div>
<div class="t" style="left:1249.0px;top:1399.2px;font-size:23.2px;line-height:25.91px;color:#2b2e4a;transform:scaleX(0.9743);transform-origin:left;z-index:2;">S:optiker-michelmann.de</div>
<div class="t" style="left:1704.5px;top:1406.0px;font-size:25px;line-height:27.93px;color:#2b2e4a;transform:scaleX(0.8426);transform-origin:left;z-index:2;">GET</div>
<div class="r" style="left:1967px;top:1411.1px;width:17.4px;height:17.4px;border-radius:50%;background:#7b74d0;z-index:2"></div>
<div class="t" style="left:1996.7px;top:1406.0px;font-size:25px;line-height:27.93px;color:#2b2e4a;transform:scaleX(0.9735);transform-origin:left;z-index:2;">503</div>
<div class="t" style="left:2230.5px;top:1406.0px;font-size:25px;line-height:27.93px;color:#2b2e4a;transform:scaleX(1.0073);transform-origin:left;z-index:2;">0.46kb</div>
<div class="t" style="left:2493.5px;top:1406.0px;font-size:25px;line-height:27.93px;color:#2b2e4a;transform:scaleX(1.0059);transform-origin:left;z-index:2;">0.18kb</div>
<div class="t" style="left:2756.9px;top:1405.5px;font-size:25.5px;line-height:28.48px;color:#2b2e4a;transform:scaleX(1.0035);transform-origin:left;z-index:2;">/favicon.ico</div>
<div class="r" style="left:591.0px;top:1590.4px;width:2717.5px;height:1.2px;background:#eaebef;"></div>
<svg class="r" style="left:638px;top:1523.9px;z-index:2" width="14" height="22"><path d="M3 2 L11 11 L3 20" fill="none" stroke="#8d90a0" stroke-width="1.8"/></svg>
<div class="t" style="left:706.4px;top:1521.5px;font-size:25px;line-height:27.93px;color:#2b2e4a;transform:scaleX(0.9506);transform-origin:left;z-index:2;">1 Jul 22:18:45</div>
<div class="t" style="left:968.9px;top:1521.5px;font-size:25px;line-height:27.93px;color:#2b2e4a;transform:scaleX(0.9845);transform-origin:left;z-index:2;">10.10.10.100</div>
<div class="r" style="left:1232.0px;top:1503.9px;width:285.0px;height:48.6px;background:#e1e4f1;border-radius:8px;z-index:2;"></div>
<div class="t" style="left:1249.0px;top:1514.7px;font-size:23.2px;line-height:25.91px;color:#2b2e4a;transform:scaleX(0.9743);transform-origin:left;z-index:2;">S:optiker-michelmann.de</div>
<div class="t" style="left:1704.5px;top:1521.5px;font-size:25px;line-height:27.93px;color:#2b2e4a;transform:scaleX(0.8426);transform-origin:left;z-index:2;">GET</div>
<div class="r" style="left:1967px;top:1526.6px;width:17.4px;height:17.4px;border-radius:50%;background:#7b74d0;z-index:2"></div>
<div class="t" style="left:1996.7px;top:1521.5px;font-size:25px;line-height:27.93px;color:#2b2e4a;transform:scaleX(0.9735);transform-origin:left;z-index:2;">503</div>
<div class="t" style="left:2230.5px;top:1521.5px;font-size:25px;line-height:27.93px;color:#2b2e4a;transform:scaleX(1.0073);transform-origin:left;z-index:2;">0.52kb</div>
<div class="t" style="left:2493.5px;top:1521.5px;font-size:25px;line-height:27.93px;color:#2b2e4a;transform:scaleX(1.0059);transform-origin:left;z-index:2;">0.18kb</div>
<div class="t" style="left:2756.9px;top:1521.0px;font-size:25.5px;line-height:28.48px;color:#2b2e4a;transform:scaleX(1.0067);transform-origin:left;z-index:2;">/eoewdksna</div>
<svg class="r" style="left:1032px;top:1414px;z-index:3" width="24" height="40" viewBox="0 0 24 40"><path d="M7 7 Q12.5 7 12.5 10 Q12.5 7 18 7 M12.5 10 L12.5 31 M7 34.5 Q12.5 34.5 12.5 31.5 Q12.5 34.5 18 34.5" fill="none" stroke="#ffffff" stroke-width="4.5" stroke-opacity="0.7" stroke-linecap="round"/><path d="M7 7 Q12.5 7 12.5 10 Q12.5 7 18 7 M12.5 10 L12.5 31 M7 34.5 Q12.5 34.5 12.5 31.5 Q12.5 34.5 18 34.5" fill="none" stroke="#111111" stroke-width="2"/><rect x="11" y="19.5" width="3" height="3" fill="#111"/></svg>
<div class="r" style="left:0;top:975px;width:3312px;height:609px;z-index:10;background:linear-gradient(to bottom, rgba(0,0,0,0) 0px, rgba(0,0,0,0.02) 60px, rgba(0,0,0,0.055) 150px, rgba(0,0,0,0.1) 250px, rgba(0,0,0,0.15) 370px, rgba(0,0,0,0.195) 480px, rgba(0,0,0,0.23) 609px)"></div>
</body></html>
